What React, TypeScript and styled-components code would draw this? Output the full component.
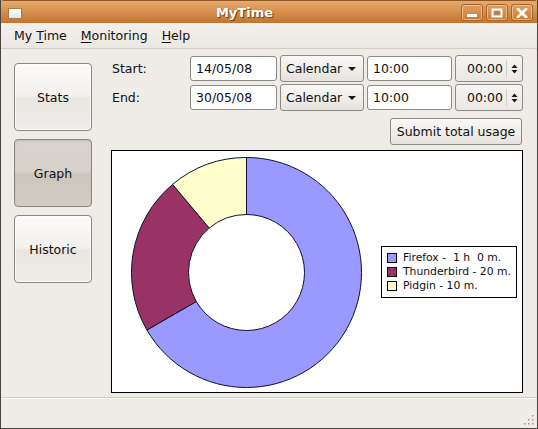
import React from "react"
import styled, { createGlobalStyle, css } from "styled-components"

const GlobalStyle = createGlobalStyle`
    html, body {
        margin: 0;
        padding: 0;
        background: #efebe7;
    }
    body {
        font-family: "DejaVu Sans", "Liberation Sans", sans-serif;
        font-size: 12.5px;
        color: #101010;
    }
`

interface Slice {
    name: string
    label: string
    minutes: number
    color: string
}

const SLICES: Slice[] = [
    { name: "Firefox", label: "Firefox -  1 h  0 m.", minutes: 60, color: "#9999ff" },
    { name: "Thunderbird", label: "Thunderbird - 20 m.", minutes: 20, color: "#993366" },
    { name: "Pidgin", label: "Pidgin - 10 m.", minutes: 10, color: "#ffffcc" },
]

const Window = styled.div`
    width: 538px;
    height: 429px;
    box-sizing: border-box;
    display: flex;
    flex-direction: column;
    background: #efebe7;
    border-left: 1px solid #4a4440;
    border-right: 1px solid #4a4440;
    border-bottom: 1px solid #4a4440;
    overflow: hidden;
`

const TitleBar = styled.div`
    height: 23px;
    flex: none;
    display: flex;
    align-items: center;
    margin: 0 -1px;
    background: linear-gradient(#e7ab6f 0%, #d99352 40%, #cc8240 75%, #c0742f 100%);
    border-top: 1px solid #8e5422;
    border-radius: 4px 4px 0 0;
    box-sizing: border-box;
`

const TitleText = styled.div`
    flex: 1;
    text-align: center;
    font-weight: bold;
    font-size: 13px;
    color: #ffffff;
    text-shadow: 1px 1px 1px #6b3a10;
    padding-left: 6px;
`

const WinIcon = styled.div`
    width: 12px;
    height: 9px;
    margin-left: 8px;
    margin-top: 2px;
    background: linear-gradient(#ffffff, #dce8f4);
    border: 1px solid #b07a45;
`

const WinButtons = styled.div`
    display: flex;
    gap: 3px;
    margin-right: 5px;
    margin-top: 1px;
`

const WinButton = styled.div`
    width: 22px;
    height: 17px;
    box-sizing: border-box;
    border: 1px solid #a8652c;
    border-radius: 3px;
    box-shadow: inset 0 0 0 1px rgba(255, 220, 180, 0.55);
    background: linear-gradient(#dfa063, #c97c38);
    display: flex;
    align-items: center;
    justify-content: center;
`

const MenuBar = styled.div`
    height: 26px;
    flex: none;
    box-sizing: border-box;
    display: flex;
    align-items: center;
    padding-left: 6px;
    border-bottom: 1px solid #d3cdc6;
    background: linear-gradient(#f3f0ed, #ebe7e2);
`

const MenuItem = styled.div`
    padding: 0 7px;
    u {
        text-decoration: underline;
        text-underline-offset: 2px;
    }
`

const Main = styled.div`
    flex: 1;
    display: flex;
    gap: 19px;
    padding: 6px 14px 0 13px;
`

const Sidebar = styled.div`
    width: 78px;
    padding-top: 8px;
    display: flex;
    flex-direction: column;
    gap: 8px;
`

const NavButton = styled.div<{ $active?: boolean }>`
    height: 68px;
    box-sizing: border-box;
    border: 1px solid #8c8782;
    border-radius: 4px;
    display: flex;
    align-items: center;
    justify-content: center;
    background: linear-gradient(#fbfaf9 0%, #f3f1ee 48%, #e9e6e2 52%, #efece9 100%);
    box-shadow: inset 0 0 0 1px rgba(255, 255, 255, 0.7);
    ${(p) => p.$active && css`
        background: linear-gradient(#d8d3cd 0%, #d6d1cb 48%, #ccc6bf 52%, #d2ccc5 100%);
        box-shadow: inset 0 1px 2px rgba(0, 0, 0, 0.12);
    `}
`

const Content = styled.div`
    width: 412px;
    display: flex;
    flex-direction: column;
`

const FormRow = styled.div`
    display: flex;
    align-items: center;
    height: 27px;
    gap: 3px;
    & + & {
        margin-top: 2px;
    }
`

const Label = styled.div`
    width: 75px;
    padding-left: 1px;
`

const TextField = styled.div<{ $width: number }>`
    width: ${(p) => p.$width}px;
    height: 25px;
    box-sizing: border-box;
    background: #ffffff;
    border: 1px solid #8d8984;
    border-radius: 3px;
    padding-left: 5px;
    display: flex;
    align-items: center;
`

const DropButton = styled.div`
    width: 84px;
    height: 27px;
    box-sizing: border-box;
    border: 1px solid #8d8984;
    border-radius: 3px;
    background: linear-gradient(#f9f8f6 0%, #f0eeeb 50%, #e6e2de 100%);
    display: flex;
    align-items: center;
    justify-content: space-between;
    padding: 0 7px 0 5px;
    white-space: nowrap;
`

const Arrow = styled.span`
    width: 0;
    height: 0;
    border-left: 4px solid transparent;
    border-right: 4px solid transparent;
    border-top: 4px solid #1a1a1a;
`

const SpinBox = styled.div`
    width: 68px;
    height: 27px;
    box-sizing: border-box;
    border: 1px solid #8d8984;
    border-radius: 3px;
    background: linear-gradient(#f6f4f2, #ebe8e4);
    display: flex;
    align-items: center;
    justify-content: flex-end;
`

const SpinText = styled.span`
    padding-right: 3px;
    border-right: 1px solid #d2cdc7;
    line-height: 17px;
`

const SpinArrows = styled.div`
    width: 15px;
    display: flex;
    justify-content: center;
`

const SubmitRow = styled.div`
    display: flex;
    justify-content: flex-end;
    padding-right: 1px;
    margin-top: 7px;
`

const PushButton = styled.div`
    height: 27px;
    width: 132px;
    box-sizing: border-box;
    border: 1px solid #8d8984;
    border-radius: 3px;
    background: linear-gradient(#f9f8f6 0%, #f0eeeb 50%, #e6e2de 100%);
    display: flex;
    align-items: center;
    justify-content: center;
    white-space: nowrap;
`

const ChartFrame = styled.div`
    margin-top: 5px;
    height: 243px;
    box-sizing: border-box;
    background: #ffffff;
    border: 1px solid #000000;
    display: flex;
    align-items: center;
`

const Legend = styled.div`
    width: 136px;
    height: 52px;
    box-sizing: border-box;
    border: 1px solid #000000;
    display: flex;
    flex-direction: column;
    justify-content: center;
    padding-left: 5px;
    font-size: 10.8px;
    line-height: 14px;
`

const LegendRow = styled.div`
    display: flex;
    align-items: center;
    gap: 6px;
    white-space: pre;
`

const Swatch = styled.span<{ $color: string }>`
    width: 8px;
    height: 8px;
    border: 1px solid #000000;
    background: ${(p) => p.$color};
`

const StatusBar = styled.div`
    height: 27px;
    flex: none;
    border-top: 1px solid #cfc9c2;
    box-shadow: inset 0 1px 0 #fbfaf9;
    display: flex;
    justify-content: flex-end;
    align-items: flex-end;
    padding: 0 3px 3px 0;
`

const point = (cx: number, cy: number, r: number, deg: number) => {
    const a = (deg * Math.PI) / 180
    return [cx + r * Math.sin(a), cy - r * Math.cos(a)]
}

const arcPath = (cx: number, cy: number, ro: number, ri: number, a0: number, a1: number) => {
    const large = a1 - a0 > 180 ? 1 : 0
    const [x0, y0] = point(cx, cy, ro, a0)
    const [x1, y1] = point(cx, cy, ro, a1)
    const [x2, y2] = point(cx, cy, ri, a1)
    const [x3, y3] = point(cx, cy, ri, a0)
    return `M${x0} ${y0} A${ro} ${ro} 0 ${large} 1 ${x1} ${y1} L${x2} ${y2} A${ri} ${ri} 0 ${large} 0 ${x3} ${y3} Z`
}

const Donut = () => {
    const total = SLICES.reduce((s, x) => s + x.minutes, 0)
    let start = 0
    return (
        <svg width={269} height={241} viewBox="0 0 269 241">
            {SLICES.map((s) => {
                const end = start + (s.minutes / total) * 360
                const d = arcPath(134.5, 121.5, 115, 58, start, end)
                start = end
                return <path key={s.name} d={d} fill={s.color} stroke="#10102a" strokeWidth={1} strokeLinejoin="round" />
            })}
        </svg>
    )
}

const ResizeGrip = () => (
    <svg width={12} height={12} viewBox="0 0 12 12">
        {[[10, 2], [10, 6], [6, 6], [10, 10], [6, 10], [2, 10]].map(([x, y]) => (
            <rect key={`${x}-${y}`} x={x} y={y} width={1.5} height={1.5} fill="#a09a93" />
        ))}
    </svg>
)

const SpinGlyph = () => (
    <svg width={7} height={12} viewBox="0 0 7 12">
        <path d="M0.5 5 L3.5 1.5 L6.5 5 Z" fill="#1a1a1a" />
        <path d="M0.5 7 L3.5 10.5 L6.5 7 Z" fill="#1a1a1a" />
    </svg>
)

const DateRow = ({ label, date }: { label: string, date: string }) => (
    <FormRow>
        <Label>{label}</Label>
        <TextField $width={87}>{date}</TextField>
        <DropButton>Calendar <Arrow /></DropButton>
        <TextField $width={85}>10:00</TextField>
        <SpinBox>
            <SpinText>00:00</SpinText>
            <SpinArrows><SpinGlyph /></SpinArrows>
        </SpinBox>
    </FormRow>
)

const App = () => {
    return (
        <>
            <GlobalStyle />
            <Window>
                <TitleBar>
                    <WinIcon />
                    <TitleText>MyTime</TitleText>
                    <WinButtons>
                        <WinButton>
                            <svg width={12} height={10} viewBox="0 0 12 10">
                                <rect x={1} y={6} width={10} height={3} fill="#ffffff" />
                            </svg>
                        </WinButton>
                        <WinButton>
                            <svg width={12} height={10} viewBox="0 0 12 10">
                                <rect x={1.5} y={1.5} width={9} height={7} fill="none" stroke="#ffffff" strokeWidth={2} />
                                <rect x={3.5} y={3.5} width={5} height={3} fill="#8f8a70" />
                            </svg>
                        </WinButton>
                        <WinButton>
                            <svg width={12} height={10} viewBox="0 0 12 10">
                                <path d="M2 1 L10 9 M10 1 L2 9" stroke="#ffffff" strokeWidth={2.6} strokeLinecap="square" />
                            </svg>
                        </WinButton>
                    </WinButtons>
                </TitleBar>
                <MenuBar>
                    <MenuItem>My <u>T</u>ime</MenuItem>
                    <MenuItem><u>M</u>onitoring</MenuItem>
                    <MenuItem><u>H</u>elp</MenuItem>
                </MenuBar>
                <Main>
                    <Sidebar>
                        <NavButton>Stats</NavButton>
                        <NavButton $active>Graph</NavButton>
                        <NavButton>Historic</NavButton>
                    </Sidebar>
                    <Content>
                        <DateRow label="Start:" date="14/05/08" />
                        <DateRow label="End:" date="30/05/08" />
                        <SubmitRow>
                            <PushButton>Submit total usage</PushButton>
                        </SubmitRow>
                        <ChartFrame>
                            <Donut />
                            <Legend>
                                {SLICES.map((s) => (
                                    <LegendRow key={s.name}>
                                        <Swatch $color={s.color} />
                                        {s.label}
                                    </LegendRow>
                                ))}
                            </Legend>
                        </ChartFrame>
                    </Content>
                </Main>
                <StatusBar>
                    <ResizeGrip />
                </StatusBar>
            </Window>
        </>
    )
}

export default App
